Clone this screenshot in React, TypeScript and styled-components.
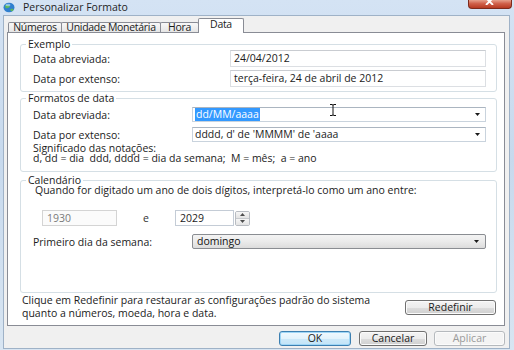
import React from 'react';
import styled, {createGlobalStyle} from 'styled-components';

const GlobalStyle = createGlobalStyle`
    html, body {
        margin: 0;
        padding: 0;
        background: #ffffff;
    }
    body {
        font-family: "Open Sans", "Noto Sans", "DejaVu Sans", sans-serif;
        font-size: 10.5px;
        color: #1b1b1b;
    }
`;

const Window = styled.div`
    width: 514px;
    height: 350px;
    box-sizing: border-box;
    padding: 0 4px 1px 3px;
    display: flex;
    flex-direction: column;
    background: linear-gradient(180deg, #d4e3f4 0%, #c7d9ed 45%, #d8e5f2 100%);
    overflow: hidden;
`;

const TitleBar = styled.div`
    height: 15px;
    flex-shrink: 0;
    display: flex;
    align-items: center;
`;

const AppIcon = styled.svg`
    width: 12px;
    height: 11px;
    margin-right: 8px;
    flex-shrink: 0;
`;

const TitleText = styled.span`
    color: #1f1f1f;
    line-height: 15px;
`;

const CloseButton = styled.div`
    align-self: flex-start;
    margin-left: auto;
    margin-right: -2px;
    width: 44px;
    height: 9px;
    box-sizing: border-box;
    border: 1px solid #7d2a1c;
    border-top: none;
    border-radius: 0 0 4px 4px;
    background: linear-gradient(180deg, #e6a08c 0%, #d0604a 45%, #b73a22 100%);
    display: flex;
    justify-content: center;
`;

const DialogBody = styled.div`
    flex: 1;
    display: flex;
    flex-direction: column;
    background: #f0f0f0;
    border: 1px solid #9fb2c7;
    padding: 2px 4px 0 3px;
`;

const TabStrip = styled.div`
    display: flex;
    align-items: flex-end;
    height: 15px;
    padding-left: 1px;
    margin-bottom: -1px;
`;

const Tab = styled.div<{ $active?: boolean; $w: number }>`
    position: relative;
    z-index: ${p => (p.$active ? 2 : 1)};
    width: ${p => p.$w}px;
    height: ${p => (p.$active ? 15 : 10)}px;
    margin-bottom: ${p => (p.$active ? 0 : 1)}px;
    margin-right: -1px;
    box-sizing: border-box;
    padding-top: ${p => (p.$active ? 1 : 0)}px;
    border: 1px solid #898c95;
    border-bottom: none;
    border-radius: 2px 2px 0 0;
    background: ${p => (p.$active ? '#ffffff' : 'linear-gradient(180deg, #f8f8f8 0%, #e5e5e5 100%)')};
    text-align: center;
    line-height: 9px;
    letter-spacing: -0.3px;
    white-space: nowrap;
`;

const TabPanel = styled.div`
    background: #ffffff;
    border: 1px solid #898c95;
    padding: 5px 7px 5px 12px;
    display: flex;
    flex-direction: column;
`;

const GroupBox = styled.fieldset<{ $pb: number; $mt?: number }>`
    margin: ${p => p.$mt ?? 0}px 0 0 0;
    padding: 0 10px ${p => p.$pb}px 12px;
    border: 1px solid #d5dfe5;
    border-radius: 3px;
    min-width: 0;
`;

const GroupLabel = styled.legend`
    padding: 0 2px;
    margin-left: -7px;
    line-height: 13px;
`;

const FieldList = styled.div<{ $mt: number; $gap: number }>`
    display: grid;
    row-gap: ${p => p.$gap}px;
    margin-top: ${p => p.$mt}px;
`;

const FieldRow = styled.div<{ $labelWidth: number; $mt?: number }>`
    display: grid;
    grid-template-columns: ${p => p.$labelWidth}px 1fr;
    align-items: center;
    margin-top: ${p => p.$mt ?? 0}px;
`;

const ReadOnlyBox = styled.div`
    height: 17px;
    box-sizing: border-box;
    border: 1px solid #dcdfe3;
    border-top-color: #c9ccd1;
    padding-left: 3px;
    line-height: 15px;
    background: #ffffff;
`;

const EditCombo = styled.div`
    position: relative;
    height: 15px;
    box-sizing: border-box;
    border: 1px solid #c9d3dd;
    border-top-color: #abb5c0;
    background: #ffffff;
    display: flex;
    align-items: center;
    padding-left: 2px;
    line-height: 13px;
`;

const Selection = styled.span`
    background: #3399ff;
    color: #ffffff;
    padding: 0 1px;
`;

const ArrowIcon = styled.svg<{ $right: number }>`
    width: 5px;
    height: 3px;
    margin-left: auto;
    margin-right: ${p => p.$right}px;
`;

const TextCursor = styled.svg`
    position: absolute;
    left: 136px;
    top: -4px;
    width: 8px;
    height: 12px;
`;

const Notes = styled.div`
    margin-top: 1px;
    line-height: 10px;
`;

const Hint = styled.div`
    margin-top: -3px;
    margin-left: 2px;
    line-height: 13px;
`;

const YearsRow = styled.div`
    display: grid;
    grid-template-columns: 75px 58px 59px 16px;
    align-items: center;
    margin-top: 13px;
    margin-left: 9px;
    height: 16px;
`;

const YearBox = styled.div<{ $disabled?: boolean }>`
    height: 16px;
    box-sizing: border-box;
    border: 1px solid ${p => (p.$disabled ? '#d4d4d4' : '#c4ccd6')};
    background: ${p => (p.$disabled ? '#fbfbfb' : '#ffffff')};
    color: ${p => (p.$disabled ? '#7a7a7a' : '#1b1b1b')};
    padding-left: 4px;
    line-height: 14px;
`;

const AndText = styled.span`
    text-align: center;
    color: #333;
`;

const Spinner = styled.div`
    height: 15px;
    margin-left: 1px;
    box-sizing: border-box;
    border: 1px solid #b8bcc2;
    border-radius: 2px;
    display: grid;
    grid-template-rows: 1fr 1fr;
    overflow: hidden;
`;

const SpinHalf = styled.div<{ $down?: boolean }>`
    display: flex;
    align-items: center;
    justify-content: center;
    background: linear-gradient(180deg, #f6f6f6 0%, #e3e3e3 100%);
    border-top: ${p => (p.$down ? '1px solid #c6c9cd' : 'none')};
`;

const DropList = styled.div`
    height: 15px;
    box-sizing: border-box;
    border: 1px solid #8a8d92;
    border-radius: 2px;
    background: linear-gradient(180deg, #f3f3f3 0%, #ebebeb 50%, #dcdcdc 100%);
    display: flex;
    align-items: center;
    padding-left: 4px;
    line-height: 13px;
    color: #111;
`;

const NoteRow = styled.div`
    display: flex;
    justify-content: space-between;
    align-items: flex-start;
    margin-top: 1px;
    padding-left: 2px;
`;

const NoteText = styled.div`
    line-height: 13px;
`;

const ButtonBar = styled.div`
    display: flex;
    justify-content: flex-end;
    gap: 7px;
    margin-top: 5px;
`;

const PushButton = styled.button<{ $w: number; $variant?: 'default' | 'normal' | 'disabled'; $mt?: number; $mr?: number }>`
    width: ${p => p.$w}px;
    height: 15px;
    margin-top: ${p => p.$mt ?? 0}px;
    margin-right: ${p => p.$mr ?? 0}px;
    box-sizing: border-box;
    padding: 0;
    border-radius: 3px;
    font-family: inherit;
    font-size: 10.5px;
    line-height: 13px;
    border: 1px solid ${p => (p.$variant === 'default' ? '#3c7fb1' : p.$variant === 'disabled' ? '#b5b9bd' : '#707070')};
    color: ${p => (p.$variant === 'disabled' ? '#9a9a9a' : '#1b1b1b')};
    background: ${p =>
        p.$variant === 'default'
            ? 'linear-gradient(180deg, #f1f9fe 0%, #e3f3fc 50%, #cde9f9 51%, #c3e4f8 100%)'
            : p.$variant === 'disabled'
                ? '#f4f4f4'
                : 'linear-gradient(180deg, #f4f4f4 0%, #ececec 50%, #dddddd 51%, #d0d0d0 100%)'};
    box-shadow: ${p => (p.$variant === 'default' ? 'inset 0 0 0 1px #9fd6f6' : 'inset 0 0 0 1px #fbfbfb')};
`;

const Arrow = ({right = 0}: { right?: number }) => (
    <ArrowIcon $right={right} viewBox="0 0 5 3">
        <polygon points="0,0 5,0 2.5,3" fill="#1b1b1b"/>
    </ArrowIcon>
);

const App: React.FC = () => {
    return (
        <>
            <GlobalStyle/>
            <Window>
                <TitleBar>
                    <AppIcon viewBox="0 0 12 11">
                        <ellipse cx="6" cy="5.5" rx="5.5" ry="4.8" fill="#2f7fcf"/>
                        <path d="M2 3.5 C4 2 6 3 7 4.5 C6 6 4 6.5 2.5 6 Z" fill="#5cb85c"/>
                        <path d="M7.5 7 C9 6.5 10.5 7 10.5 8 C9.5 9.5 8 9.5 7.5 8.5 Z" fill="#5cb85c"/>
                        <ellipse cx="5" cy="3" rx="2.5" ry="1.2" fill="#bfe3ff" opacity="0.6"/>
                    </AppIcon>
                    <TitleText>Personalizar Formato</TitleText>
                    <CloseButton>
                        <svg width="10" height="5" viewBox="0 0 10 5">
                            <path d="M1 -2 L8 5 M8 -2 L1 5" stroke="#ffffff" strokeWidth="1.8"/>
                        </svg>
                    </CloseButton>
                </TitleBar>
                <DialogBody>
                    <TabStrip>
                        <Tab $w={54}>Números</Tab>
                        <Tab $w={100}>Unidade Monetária</Tab>
                        <Tab $w={39}>Hora</Tab>
                        <Tab $w={46} $active>Data</Tab>
                    </TabStrip>
                    <TabPanel>
                        <GroupBox $pb={4}>
                            <GroupLabel>Exemplo</GroupLabel>
                            <FieldList $mt={-1} $gap={3}>
                                <FieldRow $labelWidth={197}>
                                    <span>Data abreviada:</span>
                                    <ReadOnlyBox>24/04/2012</ReadOnlyBox>
                                </FieldRow>
                                <FieldRow $labelWidth={197}>
                                    <span>Data por extenso:</span>
                                    <ReadOnlyBox>terça-feira, 24 de abril de 2012</ReadOnlyBox>
                                </FieldRow>
                            </FieldList>
                        </GroupBox>

                        <GroupBox $pb={8}>
                            <GroupLabel>Formatos de data</GroupLabel>
                            <FieldList $mt={2} $gap={5}>
                                <FieldRow $labelWidth={159}>
                                    <span>Data abreviada:</span>
                                    <EditCombo>
                                        <Selection>dd/MM/aaaa</Selection>
                                        <Arrow right={5}/>
                                        <TextCursor viewBox="0 0 8 12">
                                            <path d="M1 0.5 H3 Q4 0.5 4 1.5 Q4 0.5 5 0.5 H7 M4 1.5 V10.5 M1 11.5 H3 Q4 11.5 4 10.5 Q4 11.5 5 11.5 H7"
                                                  stroke="#111" strokeWidth="1" fill="none"/>
                                        </TextCursor>
                                    </EditCombo>
                                </FieldRow>
                                <FieldRow $labelWidth={159}>
                                    <span>Data por extenso:</span>
                                    <EditCombo>
                                        <span>dddd, d' de 'MMMM' de 'aaaa</span>
                                        <Arrow right={5}/>
                                    </EditCombo>
                                </FieldRow>
                            </FieldList>
                            <Notes>
                                Significado das notações:<br/>
                                d, dd = dia&nbsp; ddd, dddd = dia da semana;&nbsp; M = mês;&nbsp; a = ano
                            </Notes>
                        </GroupBox>

                        <GroupBox $pb={43} $mt={2}>
                            <GroupLabel>Calendário</GroupLabel>
                            <Hint>Quando for digitado um ano de dois dígitos, interpretá-lo como um ano entre:</Hint>
                            <YearsRow>
                                <YearBox $disabled>1930</YearBox>
                                <AndText>e</AndText>
                                <YearBox>2029</YearBox>
                                <Spinner>
                                    <SpinHalf>
                                        <svg width="5" height="3" viewBox="0 0 5 3">
                                            <polygon points="0,3 5,3 2.5,0" fill="#4d4d4d"/>
                                        </svg>
                                    </SpinHalf>
                                    <SpinHalf $down>
                                        <svg width="5" height="3" viewBox="0 0 5 3">
                                            <polygon points="0,0 5,0 2.5,3" fill="#4d4d4d"/>
                                        </svg>
                                    </SpinHalf>
                                </Spinner>
                            </YearsRow>
                            <FieldRow $labelWidth={159} $mt={8}>
                                <span>Primeiro dia da semana:</span>
                                <DropList>
                                    <span>domingo</span>
                                    <Arrow right={6}/>
                                </DropList>
                            </FieldRow>
                        </GroupBox>

                        <NoteRow>
                            <NoteText>
                                Clique em Redefinir para restaurar as configurações padrão do sistema<br/>
                                quanto a números, moeda, hora e data.
                            </NoteText>
                            <PushButton $w={91} $mt={6} $mr={1}>Redefinir</PushButton>
                        </NoteRow>
                    </TabPanel>
                    <ButtonBar>
                        <PushButton $w={72} $variant="default" $mr={1}>OK</PushButton>
                        <PushButton $w={68}>Cancelar</PushButton>
                        <PushButton $w={71} $variant="disabled">Aplicar</PushButton>
                    </ButtonBar>
                </DialogBody>
            </Window>
        </>
    );
};

export default App;
